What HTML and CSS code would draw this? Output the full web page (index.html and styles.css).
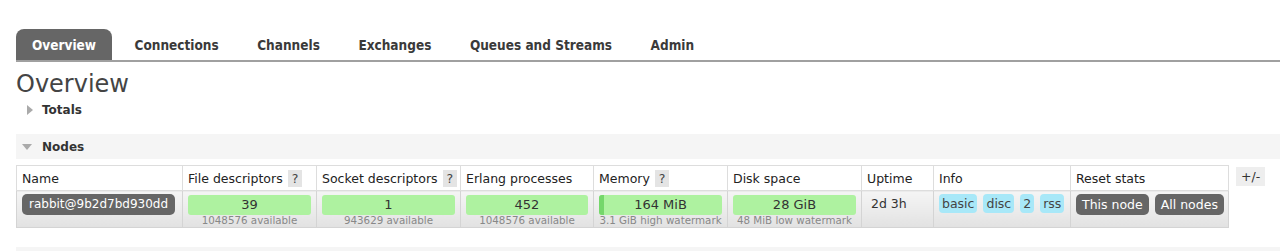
FILE: index.html
```html
<!DOCTYPE html>
<html>
<head>
<meta charset="utf-8">
<link rel="stylesheet" href="styles.css">
</head>
<body>
<nav class="tabs">
  <a class="tab active">Overview</a>
  <a class="tab">Connections</a>
  <a class="tab">Channels</a>
  <a class="tab">Exchanges</a>
  <a class="tab">Queues and Streams</a>
  <a class="tab">Admin</a>
</nav>
<main class="main">
  <h1 class="title">Overview</h1>
  <div class="section-closed"><span class="tri-right"></span>Totals</div>
  <div class="section-bar"><span class="tri-down"></span>Nodes</div>
  <div class="nodes-row">
    <table class="nodes">
      <colgroup>
        <col style="width:166px"><col style="width:134px"><col style="width:144px"><col style="width:133px"><col style="width:134px"><col style="width:134px"><col style="width:72px"><col style="width:137px"><col style="width:158px">
      </colgroup>
      <thead>
        <tr>
          <th>Name</th>
          <th>File descriptors <span class="help">?</span></th>
          <th>Socket descriptors <span class="help">?</span></th>
          <th>Erlang processes</th>
          <th>Memory <span class="help">?</span></th>
          <th>Disk space</th>
          <th>Uptime</th>
          <th>Info</th>
          <th>Reset stats</th>
        </tr>
      </thead>
      <tbody>
        <tr>
          <td><span class="btn node">rabbit@9b2d7bd930dd</span></td>
          <td><div class="bar">39</div><div class="sub">1048576 available</div></td>
          <td><div class="bar">1</div><div class="sub">943629 available</div></td>
          <td><div class="bar">452</div><div class="sub">1048576 available</div></td>
          <td><div class="bar"><span class="used" style="width:5px"></span>164 MiB</div><div class="sub">3.1 GiB high watermark</div></td>
          <td><div class="bar">28 GiB</div><div class="sub">48 MiB low watermark</div></td>
          <td class="plain">2d 3h</td>
          <td><div class="badges"><span class="badge">basic</span><span class="badge">disc</span><span class="badge">2</span><span class="badge">rss</span></div></td>
          <td><div class="btns"><span class="btn">This node</span><span class="btn">All nodes</span></div></td>
        </tr>
      </tbody>
    </table>
    <span class="toggle">+/-</span>
  </div>
  <div class="section-bar bottom"></div>
</main>
</body>
</html>
```
FILE: styles.css
```css
html, body {
  margin: 0;
  padding: 0;
  background: #fff;
}
body {
  font-family: "DejaVu Sans", Verdana, sans-serif;
  font-size: 12px;
  color: #444;
  padding-top: 29px;
  overflow: hidden;
}
.tabs {
  display: flex;
  margin-left: 16px;
  border-bottom: 2px solid #a0a0a0;
  height: 31px;
  gap: 6.5px;
}
.tab {
  display: block;
  padding: 1px 16px 0 16px;
  font-family: "DejaVu Sans Condensed", "DejaVu Sans", sans-serif;
  font-weight: bold;
  font-size: 13.5px;
  line-height: 31px;
  color: #3a3a3a;
}
.tab.active {
  background: #666;
  color: #fff;
  border-radius: 8px 8px 0 0;
}
.main {
  padding-left: 16px;
}
.title {
  margin: 7px 0 0;
  font-size: 24px;
  line-height: 30px;
  font-weight: normal;
  color: #444;
}
.section-closed {
  display: flex;
  align-items: center;
  height: 20px;
  margin-top: 1px;
  font-weight: bold;
  color: #333;
  padding-left: 11px;
}
.tri-right {
  width: 0;
  height: 0;
  border-top: 5px solid transparent;
  border-bottom: 5px solid transparent;
  border-left: 6px solid #aaa;
  margin-right: 9px;
}
.tri-down {
  width: 0;
  height: 0;
  border-left: 5px solid transparent;
  border-right: 5px solid transparent;
  border-top: 6px solid #aaa;
  margin-right: 10px;
}
.section-bar {
  display: flex;
  align-items: center;
  margin-top: 14px;
  height: 25px;
  background: #f5f5f5;
  font-weight: bold;
  color: #333;
  padding-left: 6px;
}
.section-bar.bottom {
  margin-top: 19px;
  height: 4px;
}
.nodes-row {
  display: flex;
  align-items: flex-start;
  gap: 7px;
  margin-top: 6px;
}
.nodes {
  border-collapse: collapse;
  table-layout: fixed;
  width: 1212px;
  border: 1px solid #ddd;
}
.nodes th {
  text-align: left;
  font-weight: normal;
  color: #222;
  font-size: 12.5px;
  height: 23px;
  padding: 1px 5px 0;
  border: 1px solid #ddd;
  background: #fff;
  white-space: nowrap;
}
.help {
  display: inline-block;
  background: #e4e4e4;
  padding: 0 4px;
  line-height: 17px;
  margin-left: 1px;
  color: #444;
}
.nodes td {
  vertical-align: top;
  height: 37px;
  padding: 3px 5px 0;
  border: 1px solid #d4d4d4;
  background: linear-gradient(#f5f5f5, #e2e2e2);
  box-sizing: border-box;
}
.btn {
  display: inline-block;
  background: #666;
  color: #fff;
  border-radius: 5px;
  padding: 0 6px;
  font-size: 12.5px;
  line-height: 21px;
  white-space: nowrap;
}
.btn.node {
  font-size: 12px;
  padding: 0 7px;
}
.bar {
  position: relative;
  background: #aef2a0;
  border-radius: 3px;
  height: 20px;
  line-height: 20px;
  text-align: center;
  font-size: 13px;
  color: #333;
  margin-top: 1px;
  overflow: hidden;
}
.used {
  position: absolute;
  left: 0;
  top: 0;
  bottom: 0;
  background: #75d76b;
}
.sub {
  text-align: center;
  font-size: 10.3px;
  color: #888;
  line-height: 11px;
  white-space: nowrap;
}
.nodes td.plain {
  padding-top: 5px;
  padding-left: 9px;
  font-size: 12.5px;
  color: #333;
}
.badges {
  display: flex;
  gap: 6px;
}
.badge {
  background: #a8e8f8;
  color: #444;
  border-radius: 4px;
  padding: 0 3px;
  font-size: 12.5px;
  line-height: 19px;
}
.btns {
  display: flex;
  gap: 6px;
}
.toggle {
  margin-top: 2px;
  background: #eee;
  padding: 0 5px;
  line-height: 19px;
  font-size: 12.5px;
  color: #333;
}
```
